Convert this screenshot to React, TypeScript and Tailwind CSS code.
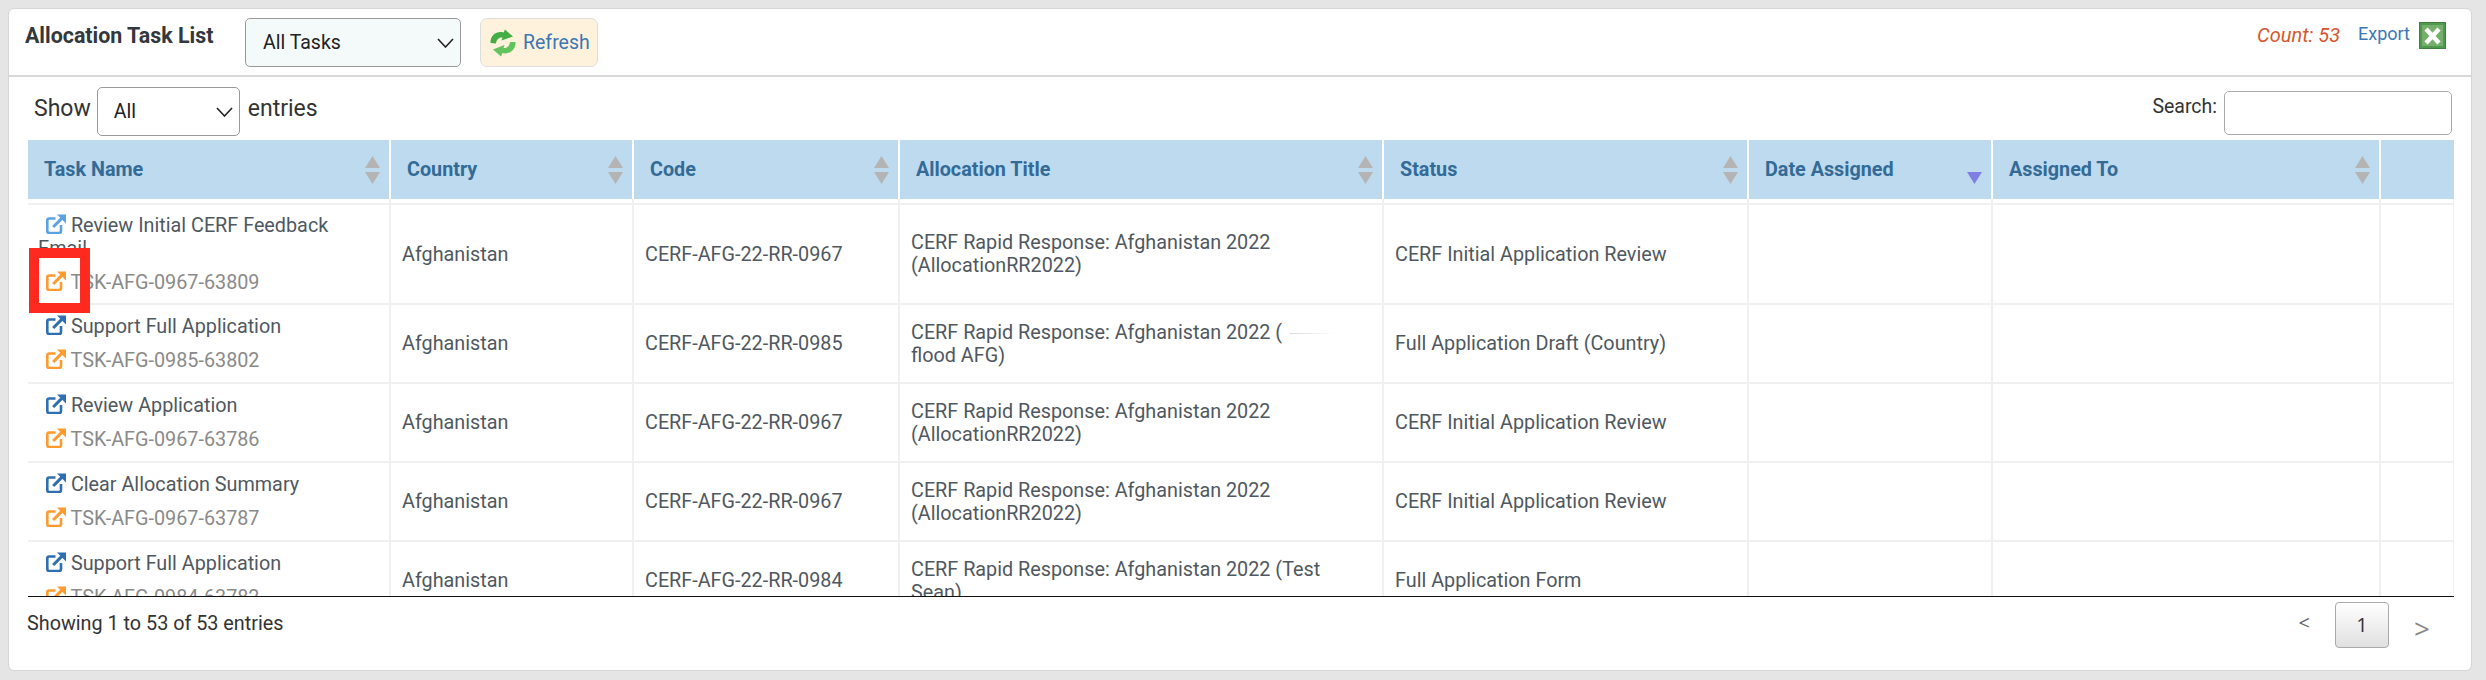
import React from "react";

const columns = [
  { label: "Task Name", width: "w-[362px]", sort: true },
  { label: "Country", width: "w-[243px]", sort: true },
  { label: "Code", width: "w-[266px]", sort: true },
  { label: "Allocation Title", width: "w-[484px]", sort: true },
  { label: "Status", width: "w-[365px]", sort: true },
  { label: "Date Assigned", width: "w-[244px]", sort: false },
  { label: "Assigned To", width: "w-[388px]", sort: true },
  { label: "", width: "w-[74px]", sort: false },
];

const rows = [
  {
    task: "Review Initial CERF Feedback Email",
    id: "TSK-AFG-0967-63809",
    code: "CERF-AFG-22-RR-0967",
    status: "CERF Initial Application Review",
  },
  {
    task: "Support Full Application",
    id: "TSK-AFG-0985-63802",
    code: "CERF-AFG-22-RR-0985",
    status: "Full Application Draft (Country)",
  },
  {
    task: "Review Application",
    id: "TSK-AFG-0967-63786",
    code: "CERF-AFG-22-RR-0967",
    status: "CERF Initial Application Review",
  },
  {
    task: "Clear Allocation Summary",
    id: "TSK-AFG-0967-63787",
    code: "CERF-AFG-22-RR-0967",
    status: "CERF Initial Application Review",
  },
  {
    task: "Support Full Application",
    id: "TSK-AFG-0984-63782",
    code: "CERF-AFG-22-RR-0984",
    status: "Full Application Form",
  },
];

const ExternalIcon = ({ className }: { className: string }) => (
  <svg
    viewBox="0 0 20 20"
    fill="none"
    stroke="currentColor"
    className={`inline-block w-[20px] h-[20px] align-[-2px] ${className}`}
  >
    <path d="M9.5 4.5H3.2Q1.3 4.5 1.3 6.5V17Q1.3 19 3.2 19H13Q15 19 15 17V11" strokeWidth="2.6" />
    <path d="M7.2 13L16.5 3.6" strokeWidth="3" />
    <path d="M11 0.6H20V9.6L17 6.6L14 3.6Z" stroke="none" fill="currentColor" />
  </svg>
);

const RefreshIcon = () => (
  <svg viewBox="0 0 28 28" className="w-[28px] h-[28px]">
    <path d="M1.5 14C1 6 8 1.5 14.5 3.5L16 0.5L24 7.5L12.5 11.5L13.5 8.5C10 8 7.5 10.5 7 14.5Z" fill="#45ad45" />
    <path d="M26.5 13C27 21 20 26 13.5 24L12 27.5L4 20.5L15.5 16L14.5 19C18 19.5 20.5 17 21 13Z" fill="#62c45c" />
  </svg>
);

const ExcelIcon = () => (
  <svg viewBox="0 0 27 27" className="w-[27px] h-[27px]">
    <rect x="0.5" y="0.5" width="26" height="26" fill="#4f9a4d" stroke="#3f7f3d" />
    <rect x="3" y="3" width="21" height="21" fill="#74b06c" />
    <path d="M7 7L20 21M20 7L7 21" stroke="#fff" strokeWidth="4.5" />
  </svg>
);

const SortArrows = ({ desc }: { desc?: boolean }) => (
  <svg viewBox="0 0 15 28" className="absolute right-[9px] top-[16px] w-[15px] h-[28px]">
    {!desc && <path d="M7.5 0L15 12H0Z" fill="#b4b4b4" />}
    <path d="M0 16H15L7.5 28Z" fill={desc ? "#7f7fe3" : "#b4b4b4"} />
  </svg>
);

const SelectChevron = ({ className }: { className: string }) => (
  <svg
    viewBox="0 0 17 10"
    fill="none"
    stroke="#222"
    strokeWidth="1.6"
    className={`pointer-events-none absolute w-[17px] h-[10px] ${className}`}
  >
    <path d="M1 1L8.5 9L16 1" />
  </svg>
);

const AllocationTitle = ({ index }: { index: number }) => {
  if (index === 1) {
    return (
      <>
        CERF Rapid Response: Afghanistan 2022 (
        <span className="ml-[8px] inline-block h-[1px] w-[44px] bg-gradient-to-r from-[#d8d8d8] to-white align-middle" />
        <br />
        flood AFG)
      </>
    );
  }
  if (index === 4) {
    return (
      <>
        CERF Rapid Response: Afghanistan 2022 (Test
        <br />
        Sean)
      </>
    );
  }
  return <>CERF Rapid Response: Afghanistan 2022 (AllocationRR2022)</>;
};

export default function App() {
  return (
    <div className="min-h-[680px] bg-[#e5e5e5] p-[8px] [font-family:Roboto,sans-serif]">
      <div className="relative h-[663px] w-[2464px] overflow-hidden rounded-[6px] border border-[#d6d6d6] bg-white">
        {/* Title bar */}
        <div className="flex h-[68px] items-start justify-between border-b-2 border-[#d8d8d8] pl-[16px] pr-[25px]">
          <div className="flex items-start">
            <h2 className="mt-[15px] w-[220px] text-[21.4px] leading-[24px] font-bold text-[#33383d]">
              Allocation Task List
            </h2>
            <div className="relative mt-[9px]">
              <select className="h-[49px] w-[216px] appearance-none rounded-[5px] border border-[#999] bg-[#f4faf9] pl-[17px] text-[19.5px] text-[#222]">
                <option>All Tasks</option>
              </select>
              <SelectChevron className="top-[20px] left-[192px]" />
            </div>
            <button className="mt-[9px] ml-[19px] flex h-[49px] w-[118px] items-center gap-[6px] rounded-[7px] border border-[#ddd] bg-[#fff2dc] pl-[8px] text-[19.5px] text-[#3a78b5]">
              <RefreshIcon />
              Refresh
            </button>
          </div>
          <div className="mt-[13px] flex items-start">
            <span className="mt-[1px] text-[20px] leading-[24px] text-[#d8562b] italic">Count: 53</span>
            <a className="ml-[18px] text-[18px] leading-[24px] text-[#3a78b5]">Export</a>
            <span className="ml-[9px]">
              <ExcelIcon />
            </span>
          </div>
        </div>

        {/* Show / search */}
        <div className="flex h-[63px] justify-between pr-[19px] pl-[25px] text-[#333]">
          <div className="flex items-start text-[23px]">
            <span className="mt-[20px] leading-[24px]">Show</span>
            <div className="relative mt-[10px] ml-[6px]">
              <select className="h-[49px] w-[143px] appearance-none rounded-[5px] border border-[#999] bg-white pl-[16px] text-[19.5px] text-[#222]">
                <option>All</option>
              </select>
              <SelectChevron className="top-[20px] left-[119px]" />
            </div>
            <span className="mt-[20px] ml-[8px] leading-[24px]">entries</span>
          </div>
          <div className="flex items-start text-[19.5px]">
            <span className="mt-[18px] leading-[24px]">Search:</span>
            <input className="mt-[14px] ml-[7px] h-[44px] w-[228px] rounded-[5px] border border-[#aaa] bg-white" />
          </div>
        </div>

        {/* Fixed header */}
        <div className="ml-[19px] w-[2426px]">
          <table className="w-full table-fixed border-collapse">
            <thead>
              <tr className="h-[59px] bg-[#bddaef]">
                {columns.map((col, i) => (
                  <th
                    key={col.label || i}
                    className={`relative border-r-2 border-white pl-[16px] text-left text-[19.75px] font-bold text-[#336b96] last:border-r-0 ${col.width}`}
                  >
                    {col.label}
                    {col.sort && <SortArrows />}
                    {col.label === "Date Assigned" && <SortArrows desc />}
                  </th>
                ))}
              </tr>
            </thead>
          </table>

          {/* Scrolling body, clipped mid row */}
          <div className="h-[398px] overflow-hidden border-b border-[#111]">
            <table className="w-full table-fixed border-collapse text-[19.8px] leading-[23px] text-[#50585f]">
              <colgroup>
                {columns.map((col, i) => (
                  <col key={i} className={col.width} />
                ))}
              </colgroup>
              <tbody>
                <tr className="h-[5px]">
                  {columns.map((_, i) => (
                    <td key={i} className="border-r-2 border-[#f0f0f0]" />
                  ))}
                </tr>
                {rows.map((row, i) => (
                  <tr key={i} className="border-t-2 border-[#f0f0f0]">
                    <td
                      className={`border-r-2 border-[#f0f0f0] pr-[22px] pl-[10px] ${
                        i === 0 ? "pt-[9px] pb-[9px]" : "pt-[10px] pb-[10px]"
                      }`}
                    >
                      <div>
                        <ExternalIcon className={`ml-[8px] ${i === 0 ? "text-[#5ba2e0]" : "text-[#2f6fb0]"}`} />{" "}
                        {row.task}
                      </div>
                      <div className="mt-[11px] text-[#8a8a8a]">
                        <ExternalIcon className="ml-[8px] text-[#ff9a2e]" /> {row.id}
                      </div>
                    </td>
                    <td className="border-r-2 border-[#f0f0f0] px-[11px]">Afghanistan</td>
                    <td className="border-r-2 border-[#f0f0f0] px-[11px]">{row.code}</td>
                    <td className="border-r-2 border-[#f0f0f0] px-[11px]">
                      <AllocationTitle index={i} />
                    </td>
                    <td className="border-r-2 border-[#f0f0f0] px-[11px]">{row.status}</td>
                    <td className="border-r-2 border-[#f0f0f0]" />
                    <td className="border-r-2 border-[#f0f0f0]" />
                    <td className="border-r-2 border-[#f0f0f0]" />
                  </tr>
                ))}
              </tbody>
            </table>
          </div>
        </div>

        {/* Footer */}
        <div className="flex items-start justify-between pr-[41px] pl-[18px]">
          <span className="mt-[15px] text-[19.8px] leading-[24px] text-[#333]">Showing 1 to 53 of 53 entries</span>
          <div className="mt-[5px] flex items-start [font-family:'Open_Sans',sans-serif]">
            <span className="mt-[9px] text-[20px] leading-[24px] text-[#666]">&lt;</span>
            <button className="ml-[25px] h-[46px] w-[54px] rounded-[4px] border border-[#aaa] bg-gradient-to-b from-white to-[#e0e0e0] text-[20px] text-[#333]">
              1
            </button>
            <span className="mt-[12px] ml-[25px] text-[28px] leading-[28px] text-[#888]">&gt;</span>
          </div>
        </div>

        {/* Red highlight over the first task id */}
        <div className="absolute top-[239px] left-[20px] h-[65px] w-[61px] border-[10px] border-[#ff2a1f]" />
      </div>
    </div>
  );
}
